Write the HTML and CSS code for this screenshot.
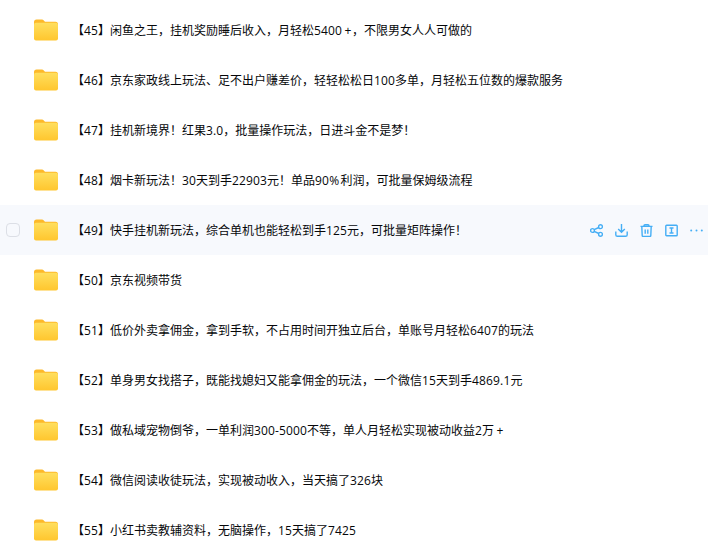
FILE: index.html
```html
<!DOCTYPE html>
<html lang="zh">
<head>
<meta charset="utf-8">
<title>文件列表</title>
<link rel="stylesheet" href="styles.css">
</head>
<body>
<svg class="defs" width="0" height="0" aria-hidden="true">
  <defs>
    <linearGradient id="fg" x1="0" y1="0" x2="0" y2="1">
      <stop offset="0" stop-color="#ffdf5e"/>
      <stop offset="1" stop-color="#ffc62e"/>
    </linearGradient>
    <symbol id="folder" viewBox="0 0 24 22">
      <path d="M0 3a2.500 2.500 0 0 1 2.500-2.500h5c1 0 1.600.3 2.300 1l1.200 1.200h10.500a2.500 2.500 0 0 1 2.500 2.500v4H0z" fill="#fdb92a"/>
      <rect x="0" y="3.800" width="24" height="17.700" rx="2" fill="url(#fg)"/>
    </symbol>
  </defs>
</svg>
<ul class="list">
  <li class="row"><span class="check"></span><svg class="folder"><use href="#folder"/></svg><span class="name">【<span class="num">45</span>】闲鱼之王，挂机奖励睡后收入，月轻松<span class="num">5400</span><span class="plus">+</span>，不限男女人人可做的</span></li>
  <li class="row"><span class="check"></span><svg class="folder"><use href="#folder"/></svg><span class="name">【<span class="num">46</span>】京东家政线上玩法、足不出户赚差价，轻轻松松日<span class="num">100</span>多单，月轻松五位数的爆款服务</span></li>
  <li class="row"><span class="check"></span><svg class="folder"><use href="#folder"/></svg><span class="name">【<span class="num">47</span>】挂机新境界！红果<span class="num">3.0</span>，批量操作玩法，日进斗金不是梦！</span></li>
  <li class="row"><span class="check"></span><svg class="folder"><use href="#folder"/></svg><span class="name">【<span class="num">48</span>】烟卡新玩法！<span class="num">30</span>天到手<span class="num">22903</span>元！单品<span class="num">90</span><span class="pct">%</span>利润，可批量保姆级流程</span></li>
  <li class="row active"><span class="check on"></span><svg class="folder"><use href="#folder"/></svg><span class="name">【<span class="num">49</span>】快手挂机新玩法，综合单机也能轻松到手<span class="num">125</span>元，可批量矩阵操作！</span>
    <span class="actions">
      <svg class="icon" viewBox="0 0 13 13"><circle cx="2.500" cy="6.500" r="1.900"/><circle cx="10.500" cy="2.700" r="1.900"/><circle cx="10.500" cy="10.300" r="1.900"/><path d="M4.200 5.700 8.800 3.500M4.200 7.300l4.600 2.200"/></svg>
      <svg class="icon" viewBox="0 0 13 13"><path d="M6.500 0v8.200M3.200 5 6.500 8.300 9.800 5M.8 7.500v3.200c0 1 .6 1.600 1.600 1.600h8.200c1 0 1.600-.6 1.600-1.600V7.500"/></svg>
      <svg class="icon" viewBox="0 0 13 13"><path d="M.5 2.400h12M4 2.400V1.700c0-.6.400-1 1-1h3c.6 0 1 .4 1 1v.7M1.800 2.400l.4 9c0 .7.500 1.100 1.100 1.100h6.400c.6 0 1.100-.4 1.100-1.100l.4-9M5.200 5.500v4.200M7.800 5.500v4.200"/></svg>
      <svg class="icon" viewBox="0 0 13 13"><rect x=".8" y="1.300" width="11.400" height="10.400" rx=".8"/><path d="M4.500 4h4M4.500 9h4M6.500 4v5"/></svg>
      <svg class="icon" viewBox="0 0 13 13"><circle class="dot" cx="1.200" cy="6.500" r="1"/><circle class="dot" cx="6.500" cy="6.500" r="1"/><circle class="dot" cx="11.800" cy="6.500" r="1"/></svg>
    </span>
  </li>
  <li class="row"><span class="check"></span><svg class="folder"><use href="#folder"/></svg><span class="name">【<span class="num">50</span>】京东视频带货</span></li>
  <li class="row"><span class="check"></span><svg class="folder"><use href="#folder"/></svg><span class="name">【<span class="num">51</span>】低价外卖拿佣金，拿到手软，不占用时间开独立后台，单账号月轻松<span class="num">6407</span>的玩法</span></li>
  <li class="row"><span class="check"></span><svg class="folder"><use href="#folder"/></svg><span class="name">【<span class="num">52</span>】单身男女找搭子，既能找媳妇又能拿佣金的玩法，一个微信<span class="num">15</span>天到手<span class="num">4869.1</span>元</span></li>
  <li class="row"><span class="check"></span><svg class="folder"><use href="#folder"/></svg><span class="name">【<span class="num">53</span>】做私域宠物倒爷，一单利润<span class="num">300-5000</span>不等，单人月轻松实现被动收益<span class="num">2</span>万<span class="plus">+</span></span></li>
  <li class="row"><span class="check"></span><svg class="folder"><use href="#folder"/></svg><span class="name">【<span class="num">54</span>】微信阅读收徒玩法，实现被动收入，当天搞了<span class="num">326</span>块</span></li>
  <li class="row"><span class="check"></span><svg class="folder"><use href="#folder"/></svg><span class="name">【<span class="num">55</span>】小红书卖教辅资料，无脑操作，<span class="num">15</span>天搞了<span class="num">7425</span></span></li>
</ul>
</body>
</html>
```
FILE: styles.css
```css
* { box-sizing: border-box; }
html, body { margin: 0; padding: 0; background: #fff; overflow: hidden; }
body { height: 554px; font-family: "Open Sans", "Noto Sans CJK SC", sans-serif; font-size: 12px; color: #06070a; }
.defs { display: block; height: 0; }
.list { list-style: none; margin: 0; padding: 5px 0 0; }
.row { display: flex; align-items: center; height: 50px; padding-left: 6px; }
.row.active { background: #f7f9fd; }
.check { width: 14px; height: 14px; flex: none; border: 1px solid transparent; border-radius: 4px; }
.check.on { border-color: #dcdfe6; }
.folder { width: 24px; height: 22px; margin-left: 14px; flex: none; }
.name { margin-left: 14px; padding-top: 2px; line-height: 20px; white-space: nowrap; }
.num { letter-spacing: 0.14px; }
.plus { padding: 0 0.5px 0 2.5px; }
.pct { padding-right: 1.5px; }
.actions { display: flex; align-items: center; gap: 12px; margin-left: auto; padding-right: 5px; }
.icon { width: 13px; height: 13px; fill: none; stroke: #45aef5; stroke-width: 1.400; }
.dot { fill: #45aef5; stroke: none; }
```
